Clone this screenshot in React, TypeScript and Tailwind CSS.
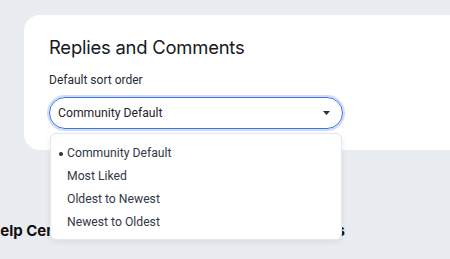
import { useState } from "react"

const OPTIONS = ["Community Default", "Most Liked", "Oldest to Newest", "Newest to Oldest"]

export default function App() {
  const [value] = useState(OPTIONS[0])

  return (
    <div className="relative w-[450px] h-[259px] overflow-hidden bg-[#e9edf1] font-['Roboto',sans-serif]">
      <div className="pt-[15px] pl-[24px]">
        {/* Settings card */}
        <div className="w-[460px] h-[135px] bg-white rounded-l-[16px] pl-[25px] pt-[20px]">
          <h2 className="font-['Inter',sans-serif] text-[18.4px] leading-[24px] text-[#161a24] tracking-[-0.2px]">Replies and Comments</h2>
          <p className="mt-[13px] text-[12px] leading-[16px] text-[#262b36]">Default sort order</p>
          <div className="mt-[9px] w-[294px] h-[32px] rounded-full border-[1.5px] border-[#3f74e6] ring-2 ring-[#cfdcf8] flex items-center justify-between pl-[8px] pr-[12px]">
            <span className="text-[12.2px] text-[#1f2430]">{value}</span>
            <svg width="7" height="4" viewBox="0 0 7 4"><path d="M0 0h7L3.5 4z" fill="#2a2f3a" /></svg>
          </div>
        </div>

        {/* Footer links behind the menu */}
        <div className="mt-[70px] -ml-[35px] flex justify-between w-[356px] font-['Inter',sans-serif] text-[15px] font-bold text-[#111]">
          <span>Help Center</span>
          <span>Guidelines</span>
        </div>
      </div>

      {/* Open dropdown menu */}
      <ul className="absolute left-[50px] top-[133px] w-[292px] h-[107px] bg-white rounded-[6px] border border-[#e6e8ec] shadow-[0_2px_6px_rgba(0,0,0,0.08)] pt-[8px] text-[12.2px] text-[#323847]">
        {OPTIONS.map((o) => (
          <li key={o} className="h-[23px] flex items-center">
            <span className="w-[16px] flex justify-center pl-[3px]">
              {o === value && <span className="w-[4px] h-[4px] rounded-full bg-[#2a2f3a]" />}
            </span>
            <span>{o}</span>
          </li>
        ))}
      </ul>
    </div>
  )
}
